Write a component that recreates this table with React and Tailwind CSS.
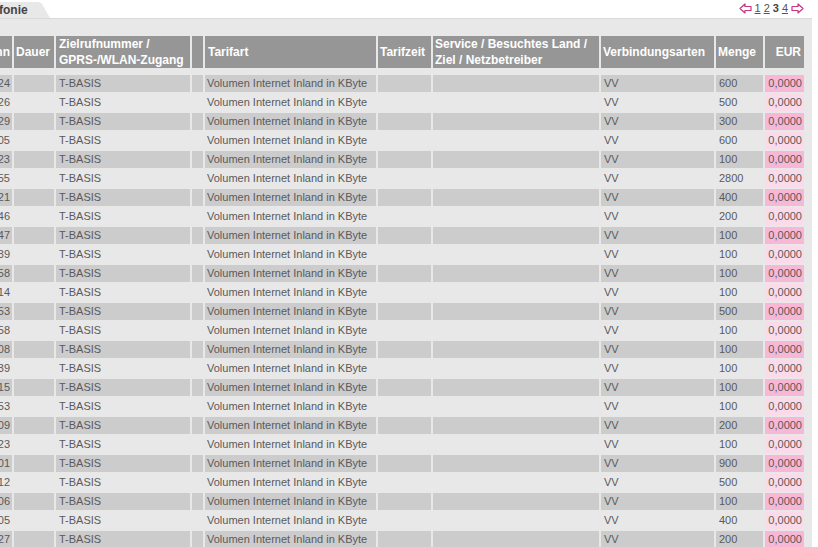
const rows = [
  ["10:24", "600"],
  ["10:26", "500"],
  ["10:29", "300"],
  ["11:05", "600"],
  ["11:23", "100"],
  ["11:55", "2800"],
  ["12:21", "400"],
  ["12:46", "200"],
  ["12:47", "100"],
  ["13:39", "100"],
  ["13:58", "100"],
  ["14:14", "100"],
  ["14:53", "500"],
  ["14:58", "100"],
  ["15:08", "100"],
  ["15:39", "100"],
  ["16:15", "100"],
  ["16:53", "100"],
  ["17:09", "200"],
  ["17:23", "100"],
  ["18:01", "900"],
  ["18:12", "500"],
  ["19:06", "100"],
  ["19:05", "400"],
  ["20:27", "200"],
];

const cols =
  "grid grid-cols-[42px_40px_134px_11px_171px_53px_166px_113px_47px_39px] gap-x-[2px]";

function Arrow({ dir }) {
  return (
    <svg width="13" height="11" viewBox="0 0 13 11" className="shrink-0">
      <path
        d={
          dir === "left"
            ? "M1 5.5 L6 1 L6 3.5 L12 3.5 L12 7.5 L6 7.5 L6 10 Z"
            : "M12 5.5 L7 1 L7 3.5 L1 3.5 L1 7.5 L7 7.5 L7 10 Z"
        }
        fill="none"
        stroke="#c8357f"
        strokeWidth="1.2"
        strokeLinejoin="round"
      />
    </svg>
  );
}

export default function App() {
  return (
    <div className="w-[818px] h-[547px] bg-white overflow-hidden font-['Liberation_Sans',Arial,sans-serif]">
      <div className="h-[18px] flex items-end justify-between">
        <div className="flex items-end h-[16px]">
          <div className="h-[16px] w-[38px] bg-[#e8e8e8] text-[12px] font-bold text-[#444] leading-[16px] -ml-[1px]">
            fonie
          </div>
          <svg width="13" height="16" viewBox="0 0 13 16">
            <path d="M0 0 L1 0 Q3 0 5 2 L13 16 L0 16 Z" fill="#e8e8e8" />
          </svg>
        </div>
        <div className="flex items-center gap-[3px] self-start mt-[2px] mr-[14px] text-[11px] text-[#555] leading-[12px]">
          <Arrow dir="left" />
          <span className="underline">1</span>
          <span className="underline">2</span>
          <span className="font-bold text-[#444]">3</span>
          <span className="underline">4</span>
          <Arrow dir="right" />
        </div>
      </div>
      <div className="w-[812px] h-[529px] bg-[#e8e8e8] border-t border-[#dadada] overflow-hidden pt-[17px]">
        <div className="-ml-[30px] text-[11px] text-[#5a5a5a]">
          {/* header row */}
          <div className={cols + " h-[32px] text-[12px] font-bold text-white leading-[16px]"}>
            <div className="bg-[#969696] flex items-center justify-end pr-[2px]">Beginn</div>
            <div className="bg-[#969696] flex items-center pl-[2px]">Dauer</div>
            <div className="bg-[#969696] flex items-center pl-[3px]">
              Zielrufnummer /<br />GPRS-/WLAN-Zugang
            </div>
            <div className="bg-[#969696]"></div>
            <div className="bg-[#969696] flex items-center pl-[3px]">Tarifart</div>
            <div className="bg-[#969696] flex items-center pl-[2px]">Tarifzeit</div>
            <div className="bg-[#969696] flex items-center pl-[2px]">
              Service / Besuchtes Land /<br />Ziel / Netzbetreiber
            </div>
            <div className="bg-[#969696] flex items-center pl-[2px]">Verbindungsarten</div>
            <div className="bg-[#969696] flex items-center pl-[2px]">Menge</div>
            <div className="bg-[#969696] flex items-center justify-end pr-[3px]">EUR</div>
          </div>
          <div className="flex flex-col gap-y-[2px] mt-[7px]">
            {rows.map(([time, menge], i) => {
              const dark = i % 2 === 0;
              const cell = dark ? "bg-[#cccccc]" : "bg-[#e8e8e8]";
              return (
                <div key={i} className={cols + " h-[17px] leading-[17px]"}>
                  <div className={cell + " text-right pr-[2px]"}>{time}</div>
                  <div className={cell}></div>
                  <div className={cell + " pl-[3px]"}>T-BASIS</div>
                  <div className={cell}></div>
                  <div className={cell + " pl-[2px]"}>Volumen Internet Inland in KByte</div>
                  <div className={cell}></div>
                  <div className={cell}></div>
                  <div className={cell + " pl-[3px]"}>VV</div>
                  <div className={cell + " pl-[3px]"}>{menge}</div>
                  <div
                    className={
                      (dark ? "bg-[#f7b7d5]" : "bg-[#fbdbea]") + " text-right pr-[2px]"
                    }
                  >
                    0,0000
                  </div>
                </div>
              );
            })}
          </div>
        </div>
      </div>
    </div>
  );
}
